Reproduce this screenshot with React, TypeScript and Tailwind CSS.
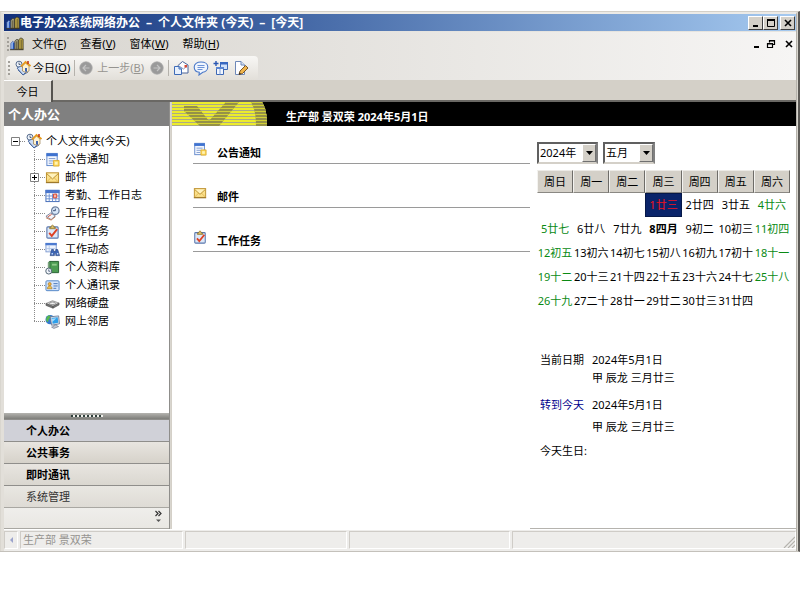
import React, { useState } from "react";

type IconProps = { className?: string };
type Draw = (p: IconProps) => React.ReactElement;

const size = "block h-4 w-4 shrink-0";

const AppLogo: Draw = ({ className = size }) => (
  <svg viewBox="0 0 16 16" className={className} aria-hidden="true">
    <path d="M1 7.500 3 5l2 1.500V14H1z" fill="#9fc0ee" stroke="#2c4fa0" strokeWidth=".8" />
    <path d="M3.200 7 5 6v8H3.200z" fill="#2452b8" />
    <path d="M5.500 4.500 8 2.500l1.500 1V14h-4z" fill="#a5a184" stroke="#3c3a2c" strokeWidth=".8" />
    <path d="M10 3 12.500 1 15 2.500V14h-5z" fill="#c4ac48" stroke="#3b3520" strokeWidth=".9" />
    <path d="M12.800 3v11M7.700 5v9" stroke="#5a502a" strokeWidth="1" />
    <path d="M0 14.500h15.500" stroke="#3b3520" strokeWidth="1" />
  </svg>
);

const TodayIcon: Draw = ({ className = size }) => (
  <svg viewBox="0 0 16 16" className={className} aria-hidden="true">
    <circle cx="4" cy="4.200" r="3" fill="#eef4fc" stroke="#566b8c" strokeWidth="1" />
    <path d="M4 2.500v2h1.500" stroke="#33415c" strokeWidth=".8" fill="none" />
    <path d="m2 8 4-2 6 5-4 4z" fill="#c8daf5" stroke="#46659c" strokeWidth=".9" />
    <path d="m3 10 5 5 5-3" stroke="#46659c" strokeWidth=".9" fill="none" />
    <path d="M7.500 6v5l3.500 1.500 3-1.500V6l-3.500-3z" fill="#fff3cf" stroke="#9a7b4a" strokeWidth=".7" />
    <path d="M6 6.500 10.500 2 15.500 6" stroke="#e89b1c" strokeWidth="1.700" fill="none" />
    <path d="M13 1v3" stroke="#c0391b" strokeWidth="1.600" />
    <path d="M10 8h2v4l-2-.6z" fill="#3f62b0" />
  </svg>
);

const NoticeIcon: Draw = ({ className = size }) => (
  <svg viewBox="0 0 16 16" className={className} aria-hidden="true">
    <rect x="2" y="1.500" width="11" height="13" fill="#f3f7fe" stroke="#5a82c8" />
    <path d="M1.500 1.500h12v3h-12z" fill="#3e72d0" />
    <path d="M4 7h7M4 9.500h5M4 12h4" stroke="#7c98cc" strokeWidth="1" />
    <path d="M9 9h6v6H9z" fill="#fbd75b" stroke="#d9a320" strokeWidth=".8" />
    <path d="M10.500 10.500h3v3h-3z" fill="#fff3b5" />
  </svg>
);

const MailIcon: Draw = ({ className = size }) => (
  <svg viewBox="0 0 16 16" className={className} aria-hidden="true">
    <rect x="1.500" y="3" width="13" height="10" fill="#fbe08a" stroke="#b98b25" />
    <path d="m2 12.500 4.500-4.500M14 12.500 9.500 8" stroke="#e0b857" strokeWidth="1" />
    <path d="m2 4 6 5.500L14 4" stroke="#b88c2c" strokeWidth="1" fill="#fff2bd" />
    <path d="M1 13.500h14" stroke="#8f6a1d" />
  </svg>
);

const CalendarIcon: Draw = ({ className = size }) => (
  <svg viewBox="0 0 16 16" className={className} aria-hidden="true">
    <rect x="1" y="2.500" width="14" height="12" fill="#fff" stroke="#3d67b5" />
    <path d="M.5 2h15v3.500H.5z" fill="#4a76cc" />
    <path d="M1 8.500h14M1 11.500h14M4.500 6v8M8 6v8M11.500 6v8" stroke="#6e92d3" />
    <path d="M9 6.500h3.500v4H9z" fill="#f6b5a5" stroke="#d8422b" />
  </svg>
);

const ScheduleIcon: Draw = ({ className = size }) => (
  <svg viewBox="0 0 16 16" className={className} aria-hidden="true">
    <path d="m1 11 5-3.500 5 3-4.500 4z" fill="#f5f5fa" stroke="#6d7892" strokeWidth=".9" />
    <path d="m1 12.500 5.500 2.500L11 11.500" stroke="#c87d55" strokeWidth="1" fill="none" />
    <path d="m3 11.500 4-2.500" stroke="#cf4a32" strokeWidth="1" />
    <circle cx="11" cy="5" r="4" fill="#d9e8fa" stroke="#6c7f9f" strokeWidth="1.300" />
    <path d="M11 2.800V5H8.500" stroke="#34456a" fill="none" />
  </svg>
);

const TaskIcon: Draw = ({ className = size }) => (
  <svg viewBox="0 0 16 16" className={className} aria-hidden="true">
    <rect x="2" y="3" width="12" height="12" rx="1" fill="#dde8f8" stroke="#5b78ad" strokeWidth="1.200" />
    <path d="M5 5V3.500h1.500C6.500.5 9.500.5 9.500 3.500H11V5z" fill="#dcc06a" stroke="#8a6d25" strokeWidth=".8" />
    <path d="m4.500 9.500 2.700 3.200L13 5.500" stroke="#dd4125" strokeWidth="2" fill="none" />
  </svg>
);

const ActivityIcon: Draw = ({ className = size }) => (
  <svg viewBox="0 0 16 16" className={className} aria-hidden="true">
    <rect x="1" y="1.500" width="11" height="9" fill="#edf3fd" stroke="#7d9ad0" />
    <path d="M.5 1h12v2.500H.5z" fill="#4c7ad0" />
    <path d="M4.500 4v6.500M1 7h10" stroke="#b5c8e8" />
    <path d="M7 8h2v2h2.500V8h2l2 6.500h-4V12H10v2.500H5.500z" fill="#3e68ba" stroke="#24417f" strokeWidth=".7" />
    <path d="M7 12.500h1.500M12.700 12.500h1.500" stroke="#c6d9f6" strokeWidth="1.500" />
  </svg>
);

const LibraryIcon: Draw = ({ className = size }) => (
  <svg viewBox="0 0 16 16" className={className} aria-hidden="true">
    <path d="M5 1.500h9.500v12H5z" fill="#4c9b52" stroke="#246030" />
    <path d="M3.500 2.500 5 1.500v12h-1.500z" fill="#a7cfa2" stroke="#246030" strokeWidth=".6" />
    <path d="M7.500 4h5v2h-5z" fill="#8fca8b" />
    <circle cx="4" cy="11.800" r="3.200" fill="#f1f5fb" stroke="#4d5f6e" />
    <path d="M4 10v2h1.700" stroke="#34456a" fill="none" strokeWidth=".8" />
  </svg>
);

const ContactsIcon: Draw = ({ className = size }) => (
  <svg viewBox="0 0 16 16" className={className} aria-hidden="true">
    <rect x="1" y="3" width="14" height="10.500" rx="1" fill="#d4e5fb" stroke="#4f83c4" />
    <circle cx="5" cy="6.500" r="1.700" fill="#f1b53f" stroke="#9f6b1b" strokeWidth=".6" />
    <path d="M2.500 11.500c0-4 5-4 5 0z" fill="#edc04b" stroke="#9f6b1b" strokeWidth=".6" />
    <path d="M9 6h4.500M9 8.500h4.500M9 11h3" stroke="#4573b7" />
  </svg>
);

const DiskIcon: Draw = ({ className = size }) => (
  <svg viewBox="0 0 16 16" className={className} aria-hidden="true">
    <path d="m1 8 7-3 7 2.500-6.500 3.500z" fill="#d2d2d2" stroke="#8a8a8a" strokeWidth=".8" />
    <path d="M1 8v2l7.500 3v-2zM8.500 11v2L15 9.500v-2z" fill="#767676" stroke="#4d4d4d" strokeWidth=".6" />
    <ellipse cx="8" cy="7.800" rx="3.200" ry="1.300" fill="#f3f3f3" stroke="#6d6d6d" strokeWidth=".7" />
  </svg>
);

const NetworkIcon: Draw = ({ className = size }) => (
  <svg viewBox="0 0 16 16" className={className} aria-hidden="true">
    <circle cx="5.500" cy="6" r="5" fill="#3579d0" />
    <path d="M2 3C4 1 6 1.500 6 3S4 5 3.500 7.500 1.500 7 1 6z" fill="#58b84e" />
    <path d="M5.500 3 14.500 2l1 8.500-8.500 1.500z" fill="#d9dde6" stroke="#5b6c8b" strokeWidth=".8" />
    <path d="m7 4.200 6.500-.8.700 6-6 1z" fill="#2d9fea" />
    <path d="m7.200 5 5-.6-4.500 4z" fill="#9fdcff" />
    <path d="m9.500 12 3-.6v1l2 1-5 2-2.500-1.400 2.500-1z" fill="#c3c8d2" stroke="#6f7890" strokeWidth=".7" />
  </svg>
);

const RoundArrow = ({ back }: { back?: boolean }) => (
  <svg viewBox="0 0 14 14" className="block h-3.5 w-3.5 shrink-0" aria-hidden="true">
    <circle cx="7" cy="7" r="6.200" fill="#9a9a9a" stroke="#a8a8a8" strokeWidth=".8" />
    <path
      d={back ? "M10.500 7H4.500M7 4 4 7l3 3" : "M3.500 7h6M7 4l3 3-3 3"}
      stroke="#c4c4c4"
      strokeWidth="1.200"
      fill="none"
    />
  </svg>
);

const SendIcon: Draw = ({ className = size }) => (
  <svg viewBox="0 0 16 16" className={className} aria-hidden="true">
    <path d="M5 5.500 9.500 1.500 15 5v8H5z" fill="#fff" stroke="#4b659a" />
    <path d="m6 6 4.500 3L14.500 5.500" stroke="#8799bd" fill="none" />
    <path d="M11.500 5h2.500v2.500h-2.500z" fill="#d84b36" />
    <path d="M1.500 6.500H6L8.500 9v5.500h-7z" fill="#e7f0fd" stroke="#3f6cb8" />
    <path d="M6 6.500V9h2.500" stroke="#3f6cb8" fill="none" />
  </svg>
);

const ChatIcon: Draw = ({ className = size }) => (
  <svg viewBox="0 0 16 16" className={className} aria-hidden="true">
    <path
      d="M8 2c4 0 6.800 2 6.800 5s-2.500 5-5 5.200L6 15l.3-2.800C3 12 1.200 10 1.200 7S4 2 8 2z"
      fill="#eff5fe"
      stroke="#4a78c8"
      strokeWidth="1.100"
    />
    <path d="M4.500 5.500h7M4.500 7.500h7M4.500 9.500h5" stroke="#6d93d6" />
  </svg>
);

const LayoutIcon: Draw = ({ className = size }) => (
  <svg viewBox="0 0 16 16" className={className} aria-hidden="true">
    <path d="M7.500 2.500h7v7h-7z" fill="#cfe0fa" stroke="#3d68b5" />
    <path d="M7 2h8v2.500H7z" fill="#3767c0" />
    <path d="M3.500 7.500h7v7h-7z" fill="#f1f6fe" stroke="#3d68b5" />
    <path d="M3 7h8v2H3z" fill="#5b86d2" />
    <path d="M3 1v5M.5 3.500h5" stroke="#2a57b2" strokeWidth="1.400" />
    <path d="M7 9v5.500" stroke="#7fa0db" />
  </svg>
);

const EditIcon: Draw = ({ className = size }) => (
  <svg viewBox="0 0 16 16" className={className} aria-hidden="true">
    <path d="M2.500 1.500H8l3.500 3.500v9.500h-9z" fill="#fdfdff" stroke="#6e88b8" />
    <path d="M8 1.500V5h3.500" fill="#d5e1f5" stroke="#6e88b8" />
    <path d="m6 14.500 1-3.500 5.500-5.500L15 8l-5.500 5.500z" fill="#f0b44b" stroke="#6b4a1d" strokeWidth=".9" />
    <path d="m6 14.500.5-2L8 14z" fill="#222" />
  </svg>
);

const Glyph = ({ kind }: { kind: "min" | "max" | "restore" | "close" }) => (
  <svg viewBox="0 0 10 10" className="block h-2.5 w-2.5" fill="none" stroke="#000" aria-hidden="true">
    {kind === "min" && <path d="M2 8h5" strokeWidth="2" />}
    {kind === "max" && (
      <>
        <path d="M1.500 1.500h7v7h-7z" />
        <path d="M1 2h8" strokeWidth="2" />
      </>
    )}
    {kind === "restore" && (
      <>
        <path d="M3.500 3.500v-2h5v4h-2M3 2h6" strokeWidth="1.200" />
        <path d="M1.500 4.500h5v4h-5zM1 5h6" strokeWidth="1.200" />
      </>
    )}
    {kind === "close" && <path d="m2 2 6 6M8 2 2 8" strokeWidth="1.600" />}
  </svg>
);

const Grip = () => (
  <svg viewBox="0 0 4 16" className="block h-4 w-1 shrink-0" aria-hidden="true">
    <path d="M2 1v14" stroke="#a3a09a" strokeWidth="2" strokeDasharray="2 2" />
  </svg>
);

const menus = [
  ["文件", "F"],
  ["查看", "V"],
  ["窗体", "W"],
  ["帮助", "H"],
];

const tree: { label: string; Icon: Draw; expandable?: boolean }[] = [
  { label: "公告通知", Icon: NoticeIcon },
  { label: "邮件", Icon: MailIcon, expandable: true },
  { label: "考勤、工作日志", Icon: CalendarIcon },
  { label: "工作日程", Icon: ScheduleIcon },
  { label: "工作任务", Icon: TaskIcon },
  { label: "工作动态", Icon: ActivityIcon },
  { label: "个人资料库", Icon: LibraryIcon },
  { label: "个人通讯录", Icon: ContactsIcon },
  { label: "网络硬盘", Icon: DiskIcon },
  { label: "网上邻居", Icon: NetworkIcon },
];

const sections: { label: string; Icon: Draw }[] = [
  { label: "公告通知", Icon: NoticeIcon },
  { label: "邮件", Icon: MailIcon },
  { label: "工作任务", Icon: TaskIcon },
];

const weekdays = ["周日", "周一", "周二", "周三", "周四", "周五", "周六"];

const weeks = [
  ["", "", "", "1廿三", "2廿四", "3廿五", "4廿六"],
  ["5廿七", "6廿八", "7廿九", "8四月", "9初二", "10初三", "11初四"],
  ["12初五", "13初六", "14初七", "15初八", "16初九", "17初十", "18十一"],
  ["19十二", "20十三", "21十四", "22十五", "23十六", "24十七", "25十八"],
  ["26十九", "27二十", "28廿一", "29廿二", "30廿三", "31廿四", ""],
];

function dayClass(text: string, column: number) {
  if (text === "1廿三") return "bg-[#0a246a] text-[#f0101c] outline-1 -outline-offset-1 outline-[#061848]";
  if (text === "8四月") return "font-bold";
  return column === 0 || column === 6 ? "text-[#0a8a14]" : "";
}

const Accel = ({ text, k }: { text: string; k: string }) => (
  <>
    {text}(<span className="underline">{k}</span>)
  </>
);

function TitleBar() {
  const box =
    "flex h-[14px] w-[15px] items-center justify-center border border-t-white border-l-white border-r-[#404040] border-b-[#404040] bg-[#d4d0c8]";
  return (
    <header className="flex h-[17px] items-center bg-linear-to-r from-[#12307a] to-[#a6caf0] pr-px pl-0.5">
      <AppLogo className="block h-3.5 w-3.5 shrink-0" />
      <h1 className="flex gap-1.5 text-xs leading-4 font-bold whitespace-nowrap text-white">
        <span>电子办公系统网络办公</span>
        <span>–</span>
        <span>个人文件夹 (今天)</span>
        <span>–</span>
        <span>[今天]</span>
      </h1>
      <div className="ml-auto flex">
        <button aria-label="最小化" className={box}>
          <Glyph kind="min" />
        </button>
        <button aria-label="最大化" className={box}>
          <Glyph kind="max" />
        </button>
        <button aria-label="关闭" className={box + " ml-0.5"}>
          <Glyph kind="close" />
        </button>
      </div>
    </header>
  );
}

function MenuBar() {
  return (
    <nav className="flex h-6 items-center pr-0.5 pl-0.5">
      <Grip />
      <AppLogo className="block h-3.5 w-3.5 shrink-0" />
      <ul className="ml-2 flex gap-3.5">
        {menus.map(([text, k]) => (
          <li key={k}>
            <button className="block whitespace-nowrap">
              <Accel text={text} k={k} />
            </button>
          </li>
        ))}
      </ul>
      <div className="ml-auto flex gap-1">
        <button aria-label="最小化子窗口">
          <Glyph kind="min" />
        </button>
        <button aria-label="还原子窗口">
          <Glyph kind="restore" />
        </button>
        <button aria-label="关闭子窗口" className="ml-1">
          <Glyph kind="close" />
        </button>
      </div>
    </nav>
  );
}

function ToolBar() {
  return (
    <div className="flex h-6 pl-0.5">
      <div className="flex h-6 w-[252px] items-center rounded-sm bg-linear-to-b from-[#f8f7f5] to-[#e2dfd9] pl-px">
        <Grip />
        <button className="ml-1 flex items-center whitespace-nowrap">
          <TodayIcon />
          <span className="ml-0.5">
            <Accel text="今日" k="O" />
          </span>
        </button>
        <span className="mx-1 h-4 w-px bg-[#b5b2ac]" />
        <button disabled className="flex items-center gap-1 whitespace-nowrap text-[#969490]">
          <RoundArrow back />
          <span>
            <Accel text="上一步" k="B" />
          </span>
        </button>
        <button disabled aria-label="下一步" className="ml-1.5">
          <RoundArrow />
        </button>
        <span className="mx-1 h-4 w-px bg-[#b5b2ac]" />
        <div className="flex gap-1">
          <button aria-label="发送">
            <SendIcon />
          </button>
          <button aria-label="消息">
            <ChatIcon />
          </button>
          <button aria-label="布局">
            <LayoutIcon />
          </button>
          <button aria-label="编辑">
            <EditIcon />
          </button>
        </div>
      </div>
    </div>
  );
}

function Connector({ last, expandable }: { last: boolean; expandable?: boolean }) {
  return (
    <svg viewBox="0 0 16 18" className="block h-[18px] w-4 shrink-0" aria-hidden="true">
      <path d={last ? "M5.500 0v9" : "M5.500 0v18"} stroke="#8a8a8a" strokeDasharray="1 1" />
      <path d="M5 9.500h11" stroke="#8a8a8a" strokeDasharray="1 1" />
      {expandable && (
        <>
          <path d="M1.500 5.500h8v8h-8z" fill="#fff" stroke="#808080" />
          <path d="M3 9.500h5M5.500 7v5" stroke="#000" />
        </>
      )}
    </svg>
  );
}

function Sidebar() {
  const item = "block h-[22px] border-t border-[#8f8e8b] pl-[22px] text-left leading-5";
  return (
    <aside className="flex w-[166px] shrink-0 flex-col border-r border-[#8f8e8b]">
      <h2 className="h-6 bg-[#808080] pl-1 text-[13px] leading-6 font-bold text-white">个人办公</h2>
      <div className="flex-1 bg-white pt-1.5 pb-[83px] pl-[7px]">
        <div className="flex h-[18px] items-center">
          <button aria-label="折叠">
            <svg viewBox="0 0 15 18" className="block h-[18px] w-[15px]" aria-hidden="true">
              <path d="M.5 5.500h8v8h-8z" fill="#fff" stroke="#808080" />
              <path d="M2 9.500h5" stroke="#000" />
              <path d="M9 9.500h6" stroke="#8a8a8a" strokeDasharray="1 1" />
            </svg>
          </button>
          <TodayIcon />
          <span className="ml-1">个人文件夹(今天)</span>
        </div>
        <ul className="pl-[18px]">
          {tree.map(({ label, Icon, expandable }, i) => (
            <li key={label} className="flex h-[18px] items-center">
              <Connector last={i === tree.length - 1} expandable={expandable} />
              <Icon className="block h-[15px] w-[15px] shrink-0" />
              <span className="ml-[5px] whitespace-nowrap">{label}</span>
            </li>
          ))}
        </ul>
      </div>
      <div className="flex h-1.5 items-center justify-center bg-linear-to-b from-[#b5b4b0] to-[#7e7e7a]">
        <span className="block h-0.5 w-8 bg-[repeating-linear-gradient(90deg,#2f3f3a_0_2px,#f2f2ee_2px_4px)]" />
      </div>
      <nav className="flex flex-col">
        <button className={item + " bg-[#d0d1d8] font-bold"}>个人办公</button>
        <button className={item + " bg-linear-to-b from-[#e8e5e0] to-[#d6d2ca] font-bold"}>公共事务</button>
        <button className={item + " bg-linear-to-b from-[#e8e5e0] to-[#dad7d0] font-bold"}>即时通讯</button>
        <button className={item + " bg-linear-to-b from-[#e9e7e2] to-[#dedbd5] text-[#333]"}>系统管理</button>
        <div className="flex h-[22px] justify-end border-y border-[#a9a7a2] bg-linear-to-b from-[#efeeeb] to-[#e9e7e3] pt-0.5 pr-1.5">
          <button aria-label="配置按钮" className="self-start">
            <svg viewBox="0 0 9 14" className="block h-3.5 w-[9px]" aria-hidden="true">
              <path d="m1.500 1 2.500 2.500L1.500 6M4.500 1 7 3.500 4.500 6" stroke="#333" fill="none" strokeWidth="1.200" />
              <path d="M2 9.500h5L4.500 12z" fill="#555" />
            </svg>
          </button>
        </div>
      </nav>
    </aside>
  );
}

function BannerArt() {
  return (
    <svg viewBox="0 0 96 24" className="block h-6 w-24 shrink-0" aria-hidden="true">
      <defs>
        <pattern id="lines" width="4" height="3" patternUnits="userSpaceOnUse">
          <rect width="4" height="2" fill="#ecec2c" />
        </pattern>
        <pattern id="thin" width="4" height="3" patternUnits="userSpaceOnUse">
          <rect width="4" height="1" fill="#d2d034" />
        </pattern>
        <clipPath id="edge">
          <path d="M0 0h90c4 6 5 14 5 24H0z" />
        </clipPath>
      </defs>
      <g clipPath="url(#edge)">
        <rect width="96" height="24" fill="#adab84" />
        <rect width="96" height="24" fill="url(#lines)" />
        <g fill="#959148">
          <path d="M12 4h13l12 15L54 0h13L47 24H28L12 9z" />
          <path d="M79 0h12c4 7 5 15 5 24H84c0-10-1-17-5-24z" />
        </g>
        <g fill="url(#thin)">
          <path d="M12 4h13l12 15L54 0h13L47 24H28L12 9z" />
          <path d="M79 0h12c4 7 5 15 5 24H84c0-10-1-17-5-24z" />
        </g>
      </g>
    </svg>
  );
}

function Picker(props: {
  label: string;
  value: string;
  options: string[];
  width: string;
  onChange: (v: string) => void;
}) {
  return (
    <div
      className={
        "relative h-[22px] border-2 border-t-[#606060] border-l-[#606060] border-r-[#808080] border-b-[#d4d0c8] bg-white " +
        props.width
      }
    >
      <select
        aria-label={props.label}
        value={props.value}
        onChange={(e) => props.onChange(e.target.value)}
        className="block h-[18px] w-full appearance-none pl-px leading-[18px] outline-none"
      >
        {props.options.map((o) => (
          <option key={o}>{o}</option>
        ))}
      </select>
      <span className="pointer-events-none absolute top-0 right-0 flex h-[18px] w-3.5 items-center justify-center border border-t-white border-l-white border-r-[#707070] border-b-[#707070] bg-[#d4d0c8]">
        <svg viewBox="0 0 7 4" className="block h-1 w-[7px]" aria-hidden="true">
          <path d="M0 0h7L3.500 4z" fill="#000" />
        </svg>
      </span>
    </div>
  );
}

function CalendarPane() {
  const [year, setYear] = useState("2024年");
  const [month, setMonth] = useState("五月");
  return (
    <section className="w-[266px] shrink-0 border-b border-[#b5b3ae] pt-4 pr-1.5 pl-[7px]">
      <div className="flex gap-[5px]">
        <Picker
          label="年份"
          value={year}
          options={["2023年", "2024年", "2025年"]}
          width="w-[61px]"
          onChange={setYear}
        />
        <Picker
          label="月份"
          value={month}
          options={["四月", "五月", "六月"]}
          width="w-[52px]"
          onChange={setMonth}
        />
      </div>
      <table className="mt-1.5 w-full table-fixed border-collapse text-center">
        <thead>
          <tr>
            {weekdays.map((d) => (
              <th key={d} className="h-[23px] p-0 font-normal">
                <div className="h-[23px] border border-t-[#eceae6] border-l-[#f4f3f0] border-r-[#6e6c68] border-b-[#8a8883] bg-[#d4d0c8] leading-[21px]">
                  {d}
                </div>
              </th>
            ))}
          </tr>
        </thead>
        <tbody>
          {weeks.map((w, r) => (
            <tr key={r}>
              {w.map((d, c) => (
                <td key={c} className={"h-6 p-0 leading-6 whitespace-nowrap " + dayClass(d, c)}>
                  {d}
                </td>
              ))}
            </tr>
          ))}
        </tbody>
      </table>
      <dl className="mt-[38px] grid grid-cols-[52px_1fr] pl-[3px]">
        <dt>当前日期</dt>
        <dd>
          <p>2024年5月1日</p>
          <p>甲 辰龙 三月廿三</p>
        </dd>
        <dt className="mt-[9px]">
          <a href="#today" className="text-[#00008b]">
            转到今天
          </a>
        </dt>
        <dd className="mt-[9px]">
          <p>2024年5月1日</p>
          <p className="mt-1">甲 辰龙 三月廿三</p>
        </dd>
        <dt className="mt-1.5 whitespace-nowrap">今天生日:</dt>
      </dl>
    </section>
  );
}

function StatusBar() {
  const cell = "h-[18px] border border-t-[#cfccc7] border-l-[#cfccc7] border-r-white border-b-white";
  return (
    <footer className="flex h-[22px] gap-0.5 border-t border-white bg-[#eeedeb] pt-px">
      <div className={cell + " flex w-3.5 items-center justify-center"}>
        <svg viewBox="0 0 4 8" className="block h-2 w-1" aria-hidden="true">
          <path d="M4 1v6L1 4z" fill="#9ba3cc" />
        </svg>
      </div>
      <div className={cell + " min-w-0 flex-[162] pl-0.5 leading-4 text-[#969490]"}>生产部 景双荣</div>
      <div className={cell + " flex-[162]"} />
      <div className={cell + " flex-[162]"} />
      <div className={cell + " flex flex-[286] items-end justify-end"}>
        <svg viewBox="0 0 12 12" className="block h-3 w-3" aria-hidden="true">
          <path d="M1 12 12 1M5 12l7-7M9 12l3-3" stroke="#b5b3ae" strokeWidth="1.200" />
        </svg>
      </div>
    </footer>
  );
}

export default function App() {
  return (
    <div className="min-h-screen bg-white pt-[11px] font-['Noto_Sans','Noto_Sans_CJK_SC',sans-serif] text-[11px] leading-[18px] text-black">
      <div className="border-t border-r-2 border-b border-t-[#d4d0c8] border-r-[#5c5a56] border-b-[#c4c1bb] bg-[#d9d6cf] px-px">
        <div className="border-t-2 border-r border-l-[3px] border-t-[#eceae6] border-r-[#b5b2ab] border-l-[#e2dfd9]">
          <TitleBar />
          <div className="border-t border-[#e6e4df] bg-linear-to-r from-[#d8d5cf] to-[#f6f5f4]">
            <MenuBar />
            <ToolBar />
          </div>
          <div className="flex h-[22px] bg-[#d4d0c8]">
            <button className="w-[49px] border-t border-r-2 border-t-white border-r-[#55534f] bg-[#d9d6d0]">
              今日
            </button>
            <div className="flex-1 border-b-2 border-[#6a6864]" />
          </div>
          <div className="flex">
            <Sidebar />
            <main className="ml-px flex min-w-0 flex-1 flex-col border-l border-[#d4d0c8] bg-white">
              <div className="flex h-6 bg-black">
                <BannerArt />
                <h2 className="ml-[18px] pt-1.5 font-bold whitespace-nowrap text-white">
                  生产部 景双荣 2024年5月1日
                </h2>
              </div>
              <div className="flex flex-1">
                <div className="min-w-0 flex-1 pl-[21px]">
                  {sections.map(({ label, Icon }) => (
                    <section key={label} className="h-11 pt-3.5">
                      <div className="flex h-6 gap-2.5 border-b border-[#9a9a9a]">
                        <Icon className="mt-0.5 block h-3.5 w-3.5 shrink-0" />
                        <h3 className="pt-1 font-bold">{label}</h3>
                      </div>
                    </section>
                  ))}
                </div>
                <CalendarPane />
              </div>
            </main>
          </div>
          <StatusBar />
        </div>
      </div>
    </div>
  );
}
